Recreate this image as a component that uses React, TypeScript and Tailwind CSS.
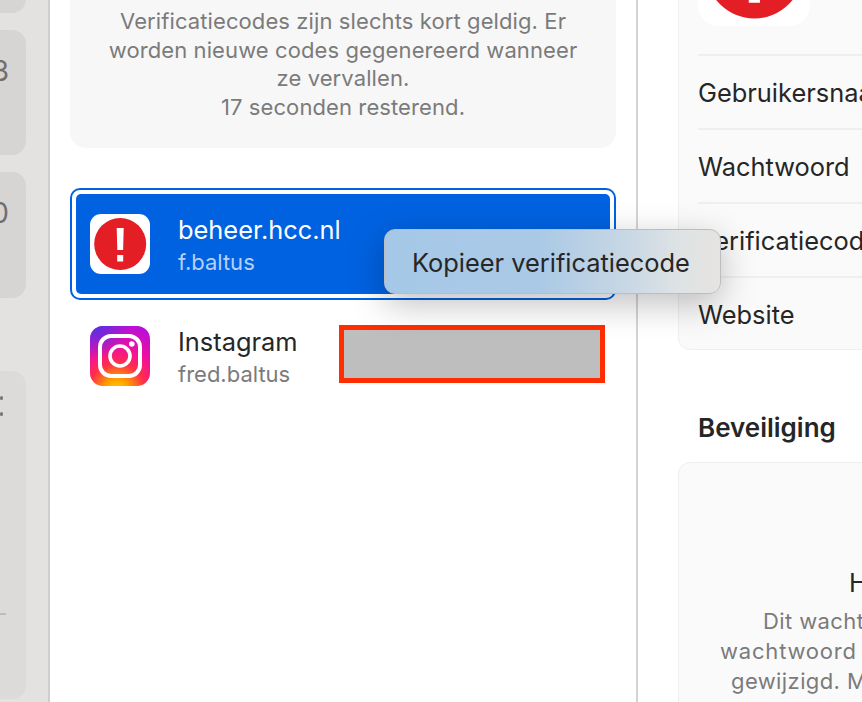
import { useId } from "react";

function AlertIcon() {
  return (
    <svg viewBox="0 0 60 60" className="block h-full w-full">
      <rect width="60" height="60" rx="11" fill="#ffffff" />
      <circle cx="30.2" cy="30" r="26" fill="#e31e24" />
      <path d="M26.7 14h7l-.6 22h-5.8zM27.2 41h6v6.5h-6z" fill="#ffffff" />
    </svg>
  );
}

function InstagramIcon() {
  const id = useId();
  return (
    <svg viewBox="0 0 60 60" className="block h-[60px] w-[60px] shrink-0">
      <defs>
        <radialGradient id={`${id}a`} cx="0.45" cy="1.08" r="1.1">
          <stop offset="0" stopColor="#ffd600" />
          <stop offset="0.2" stopColor="#ff9a00" />
          <stop offset="0.42" stopColor="#ff2f4a" />
          <stop offset="0.65" stopColor="#f2109c" />
          <stop offset="1" stopColor="#b80fd8" />
        </radialGradient>
        <radialGradient id={`${id}b`} cx="0.12" cy="0" r="0.55">
          <stop offset="0" stopColor="#5a30e0" />
          <stop offset="1" stopColor="#5a30e0" stopOpacity="0" />
        </radialGradient>
      </defs>
      <rect width="60" height="60" rx="13" fill={`url(#${id}a)`} />
      <rect width="60" height="60" rx="13" fill={`url(#${id}b)`} />
      <rect x="10" y="10" width="40" height="40" rx="11" fill="none" stroke="#fff" strokeWidth="4" />
      <circle cx="30" cy="30" r="10" fill="none" stroke="#fff" strokeWidth="3.6" />
      <circle cx="41.8" cy="18" r="2.8" fill="#fff" />
    </svg>
  );
}

function SideCard({ glyph, className }: { glyph?: string; className: string }) {
  return (
    <div className={`flex justify-end rounded-r-[14px] bg-[#d6d5d3] text-[28px] text-[#6f6f6f] ${className}`}>
      {glyph}
    </div>
  );
}

function DetailRow({ label }: { label: string }) {
  return (
    <div className="mx-[19px] flex h-[74px] items-center border-t-2 border-[#efefef] pt-[2px] text-[25.4px] text-[#262626] whitespace-nowrap">
      {label}
    </div>
  );
}

export default function App() {
  return (
    <div className="relative flex h-[702px] w-[862px] overflow-hidden bg-white font-['Inter',sans-serif]">
      {/* sidebar */}
      <div className="flex h-full w-[50px] shrink-0 flex-col border-r-2 border-[#cfcecc] bg-[#e3e2e0] pr-[22px]">
        <SideCard className="-mt-[100px] mb-[17px] h-[113px] shrink-0" />
        <SideCard glyph="3" className="mb-[17px] h-[125px] shrink-0 pt-[20px] -ml-[10px] pr-[17px]" />
        <SideCard glyph="0" className="mb-[73px] h-[126px] shrink-0 pt-[20px] -ml-[10px] pr-[17px]" />
        <div className="relative h-[328px] shrink-0 rounded-r-[14px] bg-[#dcdbd9]">
          <div className="absolute left-0 top-[25px] h-[4px] w-[3px] rounded-full bg-[#777]" />
          <div className="absolute left-0 top-[41px] h-[4px] w-[3px] rounded-full bg-[#777]" />
          <div className="absolute left-0 top-[242px] h-[2px] w-[6px] bg-[#bdbcba]" />
        </div>
      </div>

      {/* list */}
      <div className="h-full w-[586px] shrink-0 px-5">
        <div className="-mt-[40px] h-[188px] rounded-[16px] bg-[#f7f7f7] pt-[47px] text-center text-[22px] leading-[28.5px] tracking-[0.1px] text-[#7b7b7b] whitespace-nowrap">
          Verificatiecodes zijn slechts kort geldig. Er
          <br />
          worden nieuwe codes gegenereerd wanneer
          <br />
          ze vervallen.
          <br />
          17 seconden resterend.
        </div>

        <div className="mt-10 rounded-[10px] border-2 border-[#0062e1] p-1">
          <div className="flex h-[100px] items-center gap-7 rounded-[5px] bg-[#0062e1] pl-[14px]">
            <div className="h-[60px] w-[60px] shrink-0">
              <AlertIcon />
            </div>
            <div className="pt-[2px]">
              <div className="text-[25.4px] leading-[32px] text-white">beheer.hcc.nl</div>
              <div className="mt-[2px] text-[22px] leading-[28px] text-[#b5d0f5]">f.baltus</div>
            </div>
          </div>
        </div>

        <div className="mt-[26px] flex h-[60px] items-center pl-5 pr-[11px]">
          <InstagramIcon />
          <div className="ml-7 pt-[2px]">
            <div className="text-[25.4px] leading-[32px] text-[#262626]">Instagram</div>
            <div className="mt-[2px] text-[22px] leading-[28px] text-[#7b7b7b]">fred.baltus</div>
          </div>
          <div className="mb-[4px] ml-auto h-[58px] w-[266px] border-[5px] border-[#ff2d00] bg-[#bebebe]" />
        </div>
      </div>

      {/* details */}
      <div className="h-full flex-1 border-l-2 border-[#d4d4d4] pl-10">
        <div className="-mt-[100px] h-[450px] w-[400px] overflow-hidden rounded-[12px] border border-[#efefef] bg-[#fafafa]">
          <div className="h-[153px] pl-[19px] pt-[13px]">
            <div className="h-[112px] w-[112px]">
              <AlertIcon />
            </div>
          </div>
          <DetailRow label="Gebruikersnaam" />
          <DetailRow label="Wachtwoord" />
          <DetailRow label="Verificatiecode" />
          <DetailRow label="Website" />
        </div>

        <div className="ml-5 mt-[60px] text-[26px] leading-[36px] font-semibold text-[#262626]">Beveiliging</div>

        <div className="mt-4 h-[300px] w-[400px] rounded-[12px] border border-[#efefef] bg-[#fafafa] pt-[105px] text-[22px] whitespace-nowrap">
          <div className="pl-[170px] text-[25.4px] leading-[30px] text-[#262626]">Hergebruikt wachtwoord</div>
          <div className="mt-2 tracking-[0.4px] text-[#7b7b7b]">
            <div className="pl-[84px] leading-[30px]">Dit wachtwoord</div>
            <div className="pl-[41px] leading-[30px] tracking-[0.8px]">wachtwoord is</div>
            <div className="pl-[52px] leading-[30px]">gewijzigd. Maak</div>
          </div>
        </div>
      </div>

      {/* context menu */}
      <div className="absolute left-[384px] top-[229px] flex h-[65px] w-[337px] items-center rounded-[11px] border border-[#bdbdbd] bg-[linear-gradient(90deg,#a6c8e8_0%,#a9c9e6_45%,#c5d6e4_70%,#dfe3e4_88%,#e6e3e2_100%)] pl-[27px] pt-[3px] text-[25.4px] text-[#262626] shadow-[0_10px_35px_rgba(0,0,0,0.25)] whitespace-nowrap">
        Kopieer verificatiecode
      </div>
    </div>
  );
}
